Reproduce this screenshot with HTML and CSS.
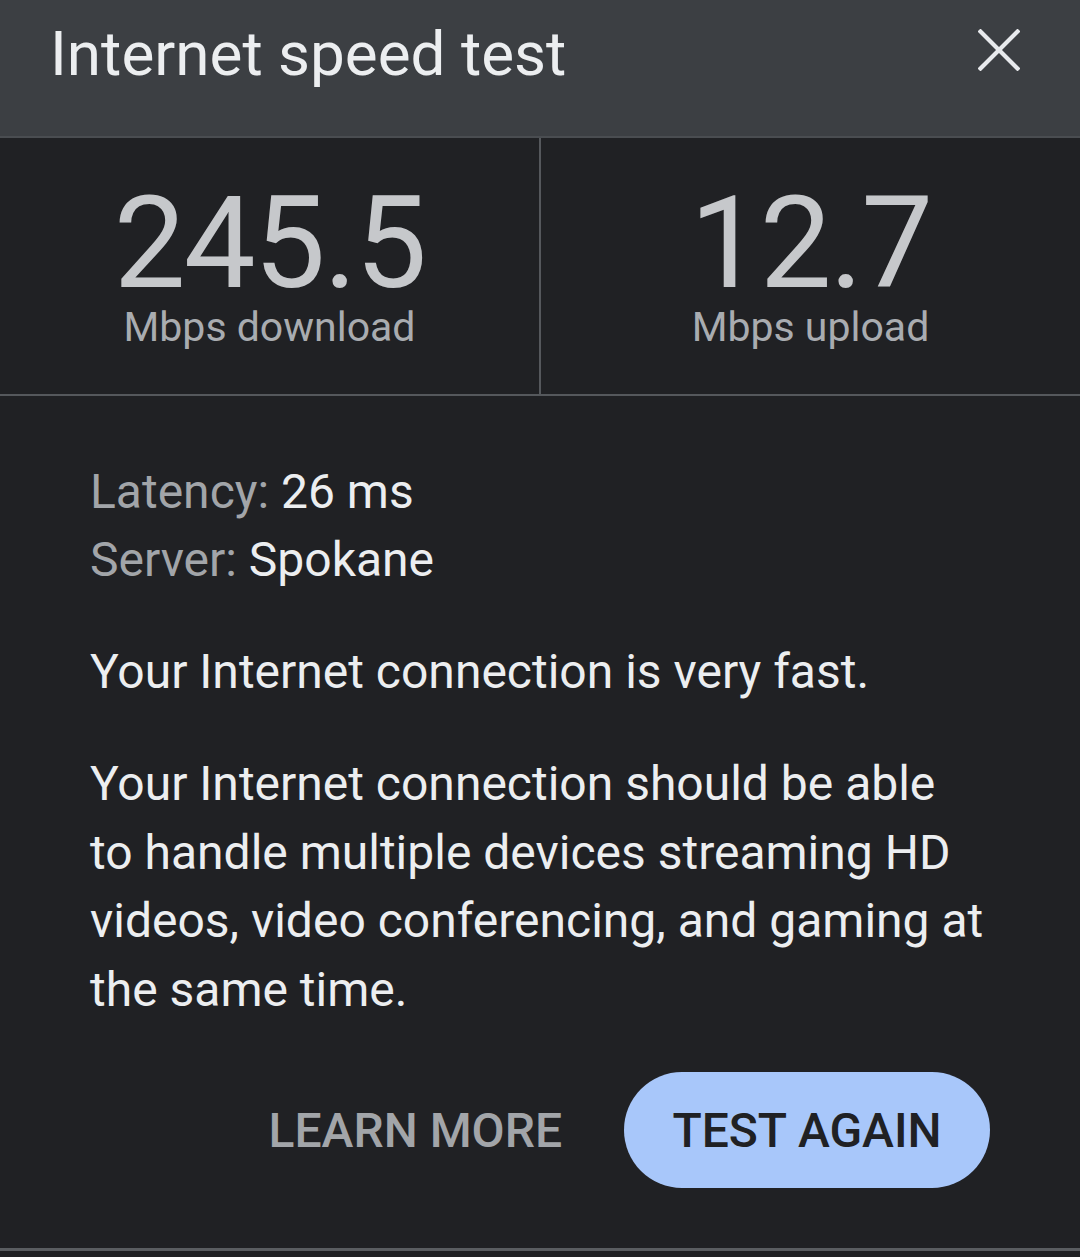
FILE: index.html
```html
<!DOCTYPE html>
<html>
<head>
<meta charset="utf-8">
<link rel="stylesheet" href="styles.css">
</head>
<body>
<div class="page">
  <header class="header">
    <h1 class="title">Internet speed test</h1>
    <button class="close" aria-label="Close">
      <svg width="42" height="42" viewBox="0 0 42 42"><path d="M2.5 2.5 L39.5 39.5 M39.5 2.5 L2.5 39.5" stroke="#e8eaed" stroke-width="4.2" stroke-linecap="square" fill="none"/></svg>
    </button>
  </header>
  <section class="stats">
    <div class="stat">
      <div class="num">245.5</div>
      <div class="unit">Mbps download</div>
    </div>
    <div class="stat">
      <div class="num">12.7</div>
      <div class="unit">Mbps upload</div>
    </div>
  </section>
  <section class="details">
    <div class="meta">
      <div><span class="label">Latency:</span> <span class="value">26 ms</span></div>
      <div><span class="label">Server:</span> <span class="value">Spokane</span></div>
    </div>
    <p class="summary">Your Internet connection is very fast.</p>
    <p class="desc">Your Internet connection should be able to handle multiple devices streaming HD videos, video conferencing, and gaming at the same time.</p>
    <div class="actions">
      <button class="learn">LEARN MORE</button>
      <button class="again">TEST AGAIN</button>
    </div>
  </section>
</div>
</body>
</html>
```
FILE: styles.css
```css
html, body {
  margin: 0;
  padding: 0;
  background: #202124;
}
.page {
  width: 1080px;
  height: 1257px;
  font-family: Roboto, "Noto Sans", sans-serif;
  color: #e8eaed;
  display: flex;
  flex-direction: column;
  box-sizing: border-box;
}
.header {
  height: 136px;
  background: #3c3f43;
  border-bottom: 2px solid #4a4d51;
  display: flex;
  align-items: flex-start;
  justify-content: space-between;
  padding: 0 60px 0 50px;
  box-sizing: content-box;
}
.title {
  margin: 0;
  font-weight: 400;
  font-size: 62px;
  line-height: 1;
  padding-top: 23px;
  color: #eceef0;
}
.close {
  background: none;
  border: 0;
  padding: 0;
  margin-top: 29px;
  width: 42px;
  height: 42px;
  cursor: pointer;
}
.close svg { display: block; }
.stats {
  display: grid;
  grid-template-columns: 541px 1fr;
  height: 256px;
  border-bottom: 2px solid #55585c;
}
.stat {
  display: flex;
  flex-direction: column;
  align-items: center;
  padding-top: 55px;
}
.stat:first-child {
  border-right: 2px solid #55585c;
}
.num {
  font-size: 128px;
  line-height: 100px;
  height: 100px;
  color: #c6c8cb;
  letter-spacing: -2px;
}
.unit {
  font-size: 41px;
  line-height: 48px;
  color: #a9acb0;
  margin-top: 10px;
}
.details {
  padding: 62px 0 0 90px;
  flex: 1;
  border-bottom: 3px solid #5a5d61;
  margin-bottom: 6px;
}
.meta {
  font-size: 48px;
  line-height: 68px;
}
.label { color: #a2a5a9; }
.value { color: #eceef0; }
.summary {
  margin: 44px 0 0;
  font-size: 48px;
  line-height: 68px;
  color: #eceef0;
}
.desc {
  width: 896px;
  margin: 44px 0 0;
  font-size: 48px;
  line-height: 68.5px;
  color: #eceef0;
}
.actions {
  display: flex;
  justify-content: flex-end;
  align-items: center;
  gap: 62px;
  margin-top: 48px;
  padding-right: 90px;
}
.learn {
  background: none;
  border: 0;
  padding: 0;
  font-family: Roboto, sans-serif;
  font-weight: 500;
  font-size: 48px;
  color: #a2a5a9;
}
.again {
  background: #a8c7fa;
  border: 0;
  border-radius: 58px;
  height: 116px;
  width: 366px;
  font-family: Roboto, sans-serif;
  font-weight: 500;
  font-size: 48px;
  color: #202124;
}
```
